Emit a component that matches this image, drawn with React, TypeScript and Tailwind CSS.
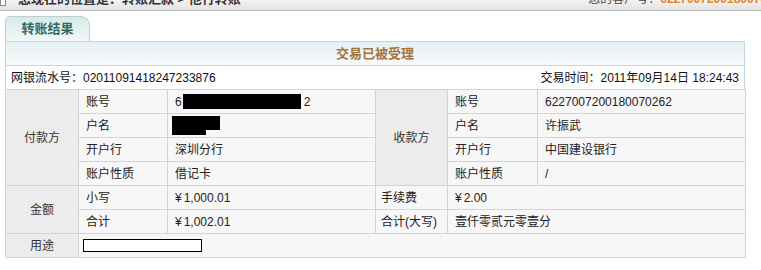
import React from 'react';

const font = { fontFamily: '"Liberation Sans", "Noto Sans CJK SC", sans-serif' };

function Cell({
  children,
  className = '',
  colSpan,
  rowSpan,
}: {
  children?: React.ReactNode;
  className?: string;
  colSpan?: number;
  rowSpan?: number;
}) {
  return (
    <td
      colSpan={colSpan}
      rowSpan={rowSpan}
      className={`border border-[#d3d3d3] p-0 align-middle ${className}`}
    >
      {children}
    </td>
  );
}

function Money({ v }: { v: string }) {
  return (
    <span>
      ¥<span className="ml-[2px]">{v}</span>
    </span>
  );
}

const group = 'bg-[#ececec] text-center text-[#333]';
const label = 'bg-[#f7f7f7] pl-[7px] text-[#222]';
const value = 'bg-[#f7f7f7] pl-[7px] text-[#222]';

export default function App() {
  return (
    <div className="w-[761px] h-[270px] overflow-hidden bg-white text-[12px]" style={font}>
      {/* breadcrumb strip, cut off at the top */}
      <div className="relative h-[11px] overflow-hidden border-b border-[#b5b5b5] bg-gradient-to-b from-[#f3f3f3] to-[#e2e2e2]">
        <div className="absolute left-0 top-[-1px] h-[7px] w-[6px] border border-[#8a8a8a] bg-white" />
        <div className="-mt-[9px] flex items-center justify-between whitespace-nowrap leading-[16px]">
          <span className="ml-[18px] font-bold text-[#333] text-[13px]">您现在的位置是：转账汇款 &gt; 他行转账</span>
          <span className="mr-[-6px] text-[#444]">
            您的客户号：<span className="font-bold text-[#e8842f]">6227007200180070</span>
          </span>
        </div>
      </div>

      <div className="px-[5px] pt-[5px]">
        {/* tab */}
        <div className="flex h-[25px] w-[85px] items-center justify-center rounded-tl-[5px] rounded-tr-[9px] border border-b-0 border-[#b9d0d2] bg-gradient-to-b from-[#d6eae8] to-[#f1f8f8]">
          <span className="text-[13px] font-bold text-[#356868]">转账结果</span>
        </div>

        {/* panel */}
        <div className="w-[740px] border border-b-0 border-[#c6d7dd]">
          <div className="flex h-[24px] items-center justify-center border-b border-[#c6d7dd] bg-gradient-to-b from-[#e5eff3] to-[#f9fbfc]">
            <span className="text-[13px] font-bold text-[#a3743d]">交易已被受理</span>
          </div>
          <div className="flex h-[23px] items-center justify-between px-[5px] text-[#111]">
            <span>网银流水号：02011091418247233876</span>
            <span>交易时间：2011年09月14日 18:24:43</span>
          </div>
        </div>

        <table className="w-[740px] table-fixed border-collapse">
          <colgroup>
            <col className="w-[73px]" />
            <col className="w-[89px]" />
            <col className="w-[208px]" />
            <col className="w-[72px]" />
            <col className="w-[90px]" />
            <col className="w-[208px]" />
          </colgroup>
          <tbody>
            <tr className="h-[24px]">
              <Cell rowSpan={4} className={group}>付款方</Cell>
              <Cell className={label}>账号</Cell>
              <Cell className={value}>
                <div className="flex items-center">
                  <span>6</span>
                  <span className="ml-[1px] inline-block h-[15px] w-[118px] bg-black" />
                  <span className="ml-[3px]">2</span>
                </div>
              </Cell>
              <Cell rowSpan={4} className={group}>收款方</Cell>
              <Cell className={label}>账号</Cell>
              <Cell className={value}>6227007200180070262</Cell>
            </tr>
            <tr className="h-[24px]">
              <Cell className={label}>户名</Cell>
              <Cell className={value}>
                <div className="flex items-start">
                  <span className="-ml-[3px] inline-block h-[19px] w-[34px] bg-black" />
                  <span className="inline-block h-[14px] w-[14px] bg-black" />
                </div>
              </Cell>
              <Cell className={label}>户名</Cell>
              <Cell className={value}>许振武</Cell>
            </tr>
            <tr className="h-[24px]">
              <Cell className={label}>开户行</Cell>
              <Cell className={value}>深圳分行</Cell>
              <Cell className={label}>开户行</Cell>
              <Cell className={value}>中国建设银行</Cell>
            </tr>
            <tr className="h-[24px]">
              <Cell className={label}>账户性质</Cell>
              <Cell className={value}>借记卡</Cell>
              <Cell className={label}>账户性质</Cell>
              <Cell className={value}>/</Cell>
            </tr>
            <tr className="h-[24px]">
              <Cell rowSpan={2} className={group}>金额</Cell>
              <Cell className={label}>小写</Cell>
              <Cell className={value}><Money v="1,000.01" /></Cell>
              <Cell className="bg-[#f7f7f7] pl-[5px] text-[#222]">手续费</Cell>
              <Cell colSpan={2} className={value}><Money v="2.00" /></Cell>
            </tr>
            <tr className="h-[24px]">
              <Cell className={label}>合计</Cell>
              <Cell className={value}><Money v="1,002.01" /></Cell>
              <Cell className="bg-[#f7f7f7] pl-[5px] text-[#222]">合计(大写)</Cell>
              <Cell colSpan={2} className={value}>壹仟零贰元零壹分</Cell>
            </tr>
            <tr className="h-[24px]">
              <Cell className={group}>用途</Cell>
              <Cell colSpan={5} className="bg-[#f7f7f7] pl-[4px]">
                <div className="h-[13px] w-[119px] border border-black bg-white" />
              </Cell>
            </tr>
          </tbody>
        </table>
      </div>
    </div>
  );
}
